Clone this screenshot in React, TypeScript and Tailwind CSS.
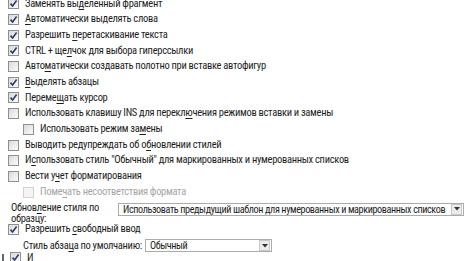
import React from "react";

type Row = {
  parts: [string, string, string];
  checked: boolean;
  indent?: boolean;
  disabled?: boolean;
};

const ROWS: Row[] = [
  { parts: ["Заменять вы", "д", "еленный фрагмент"], checked: true },
  { parts: ["", "А", "втоматически выделять слова"], checked: true },
  { parts: ["Разрешить ", "п", "еретаскивание текста"], checked: true },
  { parts: ["CTRL + ще", "л", "чок для выбора гиперссылки"], checked: true },
  { parts: ["Авто", "м", "атически создавать полотно при вставке автофигур"], checked: false },
  { parts: ["", "В", "ыделять абзацы"], checked: true },
  { parts: ["Переме", "щ", "ать курсор"], checked: true },
  { parts: ["Использовать клавишу INS для перекл", "ю", "чения режимов вставки и замены"], checked: false },
  { parts: ["Использовать режим за", "м", "ены"], checked: false, indent: true },
  { parts: ["Выводить редупреждать об о", "б", "новлении стилей"], checked: false },
  { parts: ["И", "с", "пользовать стиль \"Обычный\" для маркированных и нумерованных списков"], checked: false },
  { parts: ["Вести у", "ч", "ет форматирования"], checked: false },
  { parts: ["Поме", "ч", "ать несоответствия формата"], checked: false, indent: true, disabled: true },
];

function Check({ checked, disabled }: { checked: boolean; disabled?: boolean }) {
  return (
    <span
      className={
        "w-[11px] h-[11px] shrink-0 border flex items-center justify-center " +
        (disabled
          ? "border-[#d2d2d2] bg-[#f5f5f5]"
          : "border-[#8e8f8f] bg-gradient-to-br from-[#dadada] to-[#fbfbfb]")
      }
    >
      {checked && (
        <svg width="9" height="9" viewBox="0 0 9 9">
          <path d="M1.5 4.6 L3.6 7 L7.6 1.6" fill="none" stroke="#2b3b6c" strokeWidth="1.6" />
        </svg>
      )}
    </span>
  );
}

function Label({ parts, disabled }: { parts: [string, string, string]; disabled?: boolean }) {
  return (
    <span className={"whitespace-nowrap " + (disabled ? "text-[#a5a5a5]" : "text-[#1e1e1e]")}>
      {parts[0]}
      <span className="underline underline-offset-2">{parts[1]}</span>
      {parts[2]}
    </span>
  );
}

function Dropdown({ value, className }: { value: string; className: string }) {
  return (
    <div className={"flex items-center border border-[#ababab] bg-white h-[13px] " + className}>
      <span className="flex-1 pl-[4px] pr-[2px] whitespace-nowrap overflow-hidden text-[#1e1e1e] text-[10.2px] leading-[11px] tracking-[-0.4px]">
        {value}
      </span>
      <span className="w-[11px] h-[11px] mr-[1px] border border-[#c8c8c8] bg-[#ececec] flex items-center justify-center">
        <svg width="6" height="4" viewBox="0 0 6 4">
          <path d="M0 0 H6 L3 3.5 Z" fill="#333" />
        </svg>
      </span>
    </div>
  );
}

export default function App() {
  return (
    <div
      className="w-[474px] h-[261px] overflow-hidden bg-white text-[10.5px] leading-none tracking-[-0.3px]"
      style={{ fontFamily: '"Roboto Condensed", "Liberation Sans", sans-serif' }}
    >
      <div className="-mt-[4px] flex flex-col">
        {ROWS.map((r, i) => (
          <div key={i} className={"h-[15.7px] flex items-center gap-[6px] " + (r.indent ? "pl-[23px]" : "pl-[8px]")}>
            <Check checked={r.checked} disabled={r.disabled} />
            <Label parts={r.parts} disabled={r.disabled} />
          </div>
        ))}

        <div className="flex items-start pl-[11px] mt-[2px] h-[21px]">
          <div className="w-[107px] leading-[11px] text-[#1e1e1e]">
            Обнов<span className="underline underline-offset-2">л</span>ение стиля по
            <br />
            образцу:
          </div>
          <Dropdown
            className="w-[346px] mt-[1px]"
            value="Использовать предыдущий шаблон для нумерованных и маркированных списков"
          />
        </div>

        <div className="h-[13px] flex items-center gap-[6px] pl-[8px]">
          <Check checked />
          <Label parts={["Разрешить ", "с", "вободный ввод"]} />
        </div>

        <div className="h-[16px] mt-[2px] flex items-center pl-[23px]">
          <span className="w-[122px] whitespace-nowrap text-[#1e1e1e]">
            Стиль абза<span className="underline underline-offset-2">ц</span>а по умолчанию:
          </span>
          <Dropdown className="w-[127px]" value="Обычный" />
        </div>

        <div className="h-[8px] flex items-center gap-[6px] pl-[2px]">
          <span className="w-[2px] h-[7px] bg-[#666]" />
          <Check checked />
          <span className="text-[#1e1e1e]">И</span>
        </div>
      </div>
    </div>
  );
}
